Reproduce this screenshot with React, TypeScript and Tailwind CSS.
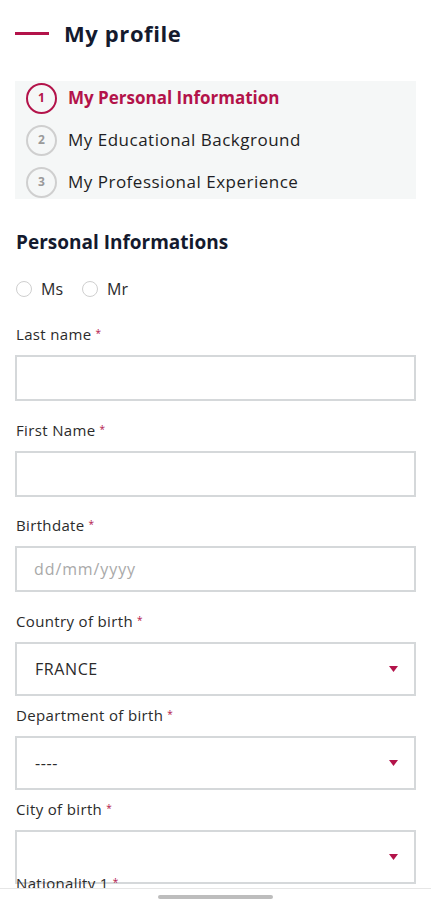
import React from "react";

const Asterisk = () => (
  <span className="text-[#b3134a] text-[10px] align-top relative top-[-1px] ml-[4px]">*</span>
);

const Label = ({ text, className = "" }: { text: string; className?: string }) => (
  <div className={"h-[20px] leading-[20px] text-[15px] tracking-[0.35px] text-[#2b2b2b] " + className}>
    {text}
    <Asterisk />
  </div>
);

const Arrow = () => (
  <svg width="9" height="6" viewBox="0 0 9 6" className="mr-[16px]">
    <path d="M0 0 H9 L4.5 6 Z" fill="#b3134a" />
  </svg>
);

const Select = ({ value }: { value: string }) => (
  <div className="mt-[11px] h-[54px] border-2 border-[#d5d8da] flex items-center justify-between pl-[18px]">
    <span className="text-[16px] tracking-[0.6px] text-[#2b2b2b]">{value}</span>
    <Arrow />
  </div>
);

const Input = ({ placeholder = "" }: { placeholder?: string }) => (
  <div className="mt-[11px] h-[46px] border-2 border-[#d5d8da] flex items-center pl-[17px]">
    <span className="text-[16px] tracking-[0.9px] text-[#a9a9a9]">{placeholder}</span>
  </div>
);

const Step = ({ n, text, active }: { n: number; text: string; active?: boolean }) => (
  <div className="flex items-center h-[30px]">
    <div
      className={
        "w-[31px] h-[31px] rounded-full border-2 flex items-center justify-center text-[12px] font-bold ml-[11px] " +
        (active ? "border-[#b3134a] text-[#b3134a]" : "border-[#cfcfcf] text-[#9a9a9a]")
      }
    >
      {n}
    </div>
    <span
      className={
        "ml-[11px] text-[17px] " +
        (active ? "font-bold text-[#b3134a]" : "text-[#1e1e24] tracking-[0.5px]")
      }
    >
      {text}
    </span>
  </div>
);

export default function App() {
  return (
    <div className="w-[431px] h-[904px] bg-white relative overflow-hidden font-['Open_Sans',sans-serif]">
      <div className="px-[15px]">
        <div className="mt-[17px] h-[32px] flex items-center">
          <div className="w-[34px] h-[3px] bg-[#b3134a]" />
          <h1 className="ml-[15px] text-[22px] font-bold tracking-[0.6px] text-[#141a2e]">My profile</h1>
        </div>

        <div className="mt-[32px] bg-[#f5f7f7] pt-[2px] pb-[2px] flex flex-col gap-[12px]">
          <Step n={1} text="My Personal Information" active />
          <Step n={2} text="My Educational Background" />
          <Step n={3} text="My Professional Experience" />
        </div>

        <h2 className="mt-[31px] h-[24px] leading-[24px] text-[19px] font-bold text-[#141a2e] ml-[1px]">
          Personal Informations
        </h2>

        <div className="mt-[25px] h-[20px] flex items-center ml-[1px] text-[16px] text-[#2b2b2b]">
          <span className="w-[16px] h-[16px] rounded-full border-[1.5px] border-[#cfcfcf]" />
          <span className="ml-[9px]">Ms</span>
          <span className="ml-[19px] w-[16px] h-[16px] rounded-full border-[1.5px] border-[#cfcfcf]" />
          <span className="ml-[9px]">Mr</span>
        </div>

        <Label text="Last name" className="mt-[25px] ml-[1px]" />
        <Input />

        <Label text="First Name" className="mt-[19px] ml-[1px]" />
        <Input />

        <Label text="Birthdate" className="mt-[18px] ml-[1px]" />
        <Input placeholder="dd/mm/yyyy" />

        <Label text="Country of birth" className="mt-[19px] ml-[1px]" />
        <Select value="FRANCE" />

        <Label text="Department of birth" className="mt-[9px] ml-[1px]" />
        <Select value="----" />

        <Label text="City of birth" className="mt-[9px] ml-[1px]" />
        <Select value="" />

        <Label text="Nationality 1" className="-mt-[11px] ml-[1px] relative" />
      </div>

      <div className="absolute left-0 right-0 bottom-0 h-[16px] bg-white border-t border-[#e6e6e6] flex justify-center">
        <div className="mt-[6px] w-[115px] h-[4px] rounded-full bg-[#bdbdbd]" />
      </div>
    </div>
  );
}
